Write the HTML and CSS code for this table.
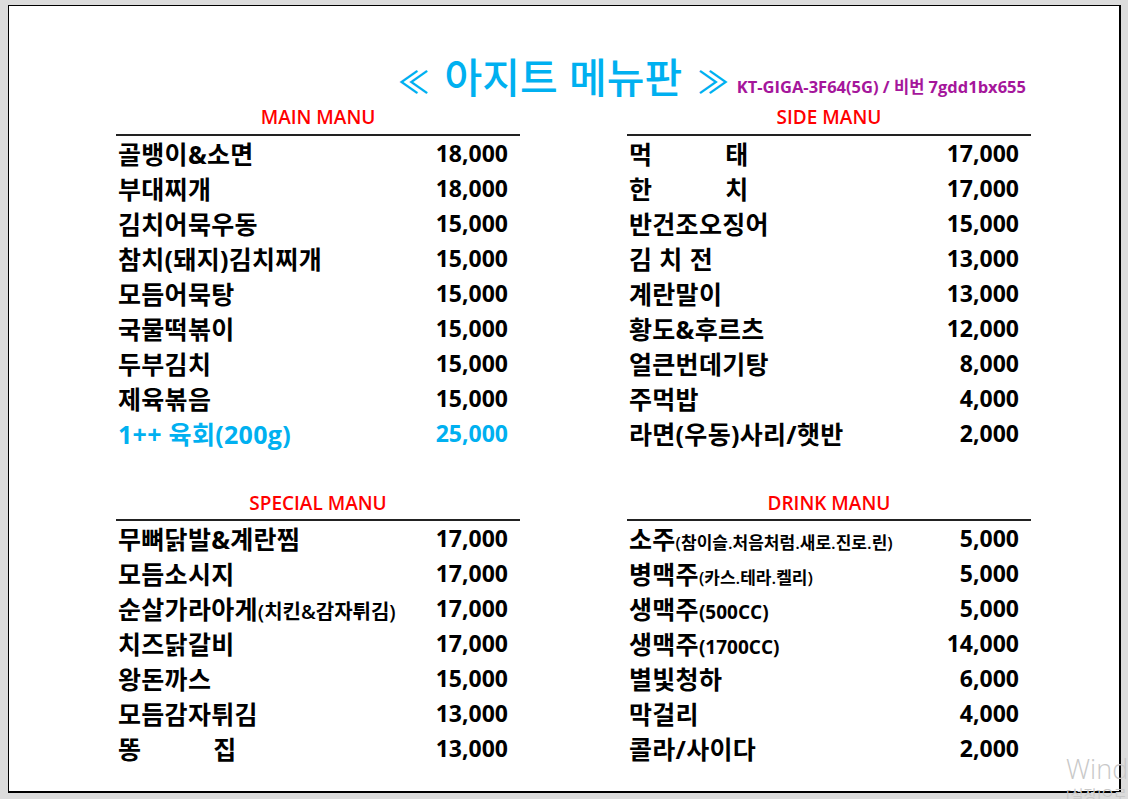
FILE: index.html
```html
<!DOCTYPE html>
<html lang="ko">
<head>
<meta charset="utf-8">
<title>아지트 메뉴판</title>
<link rel="stylesheet" href="styles.css">
</head>
<body>
<div class="sheet">
  <div class="title-row">
    <span class="title"><span class="arrow left">≪</span> 아지트 메뉴판 <span class="arrow right">≫</span></span>
    <span class="wifi">KT-GIGA-3F64(5G) / 비번 7gdd1bx655</span>
  </div>
  <div class="grid">
    <section class="menu">
      <div class="head">MAIN MANU</div>
      <div class="row"><span class="name">골뱅이&amp;소면</span><span>18,000</span></div>
      <div class="row"><span class="name">부대찌개</span><span>18,000</span></div>
      <div class="row"><span class="name">김치어묵우동</span><span>15,000</span></div>
      <div class="row"><span class="name">참치(돼지)김치찌개</span><span>15,000</span></div>
      <div class="row"><span class="name">모듬어묵탕</span><span>15,000</span></div>
      <div class="row"><span class="name">국물떡볶이</span><span>15,000</span></div>
      <div class="row"><span class="name">두부김치</span><span>15,000</span></div>
      <div class="row"><span class="name">제육볶음</span><span>15,000</span></div>
      <div class="row hl"><span class="name">1++ 육회(200g)</span><span>25,000</span></div>
    </section>
    <section class="menu">
      <div class="head">SIDE MANU</div>
      <div class="row"><span class="name">먹<i class="wide"></i>태</span><span>17,000</span></div>
      <div class="row"><span class="name">한<i class="wide"></i>치</span><span>17,000</span></div>
      <div class="row"><span class="name">반건조오징어</span><span>15,000</span></div>
      <div class="row"><span class="name">김<i class="narrow"></i>치<i class="narrow"></i>전</span><span>13,000</span></div>
      <div class="row"><span class="name">계란말이</span><span>13,000</span></div>
      <div class="row"><span class="name">황도&amp;후르츠</span><span>12,000</span></div>
      <div class="row"><span class="name">얼큰번데기탕</span><span>8,000</span></div>
      <div class="row"><span class="name">주먹밥</span><span>4,000</span></div>
      <div class="row"><span class="name">라면(우동)사리/햇반</span><span>2,000</span></div>
    </section>
    <section class="menu second">
      <div class="head">SPECIAL MANU</div>
      <div class="row"><span class="name">무뼈닭발&amp;계란찜</span><span>17,000</span></div>
      <div class="row"><span class="name">모듬소시지</span><span>17,000</span></div>
      <div class="row"><span class="name">순살가라아게<small class="note">(치킨&amp;감자튀김)</small></span><span>17,000</span></div>
      <div class="row"><span class="name">치즈닭갈비</span><span>17,000</span></div>
      <div class="row"><span class="name">왕돈까스</span><span>15,000</span></div>
      <div class="row"><span class="name">모듬감자튀김</span><span>13,000</span></div>
      <div class="row"><span class="name">똥<i class="mid"></i>집</span><span>13,000</span></div>
    </section>
    <section class="menu second">
      <div class="head">DRINK MANU</div>
      <div class="row"><span class="name">소주<small class="note sm">(참이슬.처음처럼.새로.진로.린)</small></span><span>5,000</span></div>
      <div class="row"><span class="name">병맥주<small class="note sm">(카스.테라.켈리)</small></span><span>5,000</span></div>
      <div class="row"><span class="name">생맥주<small class="note cc">(500CC)</small></span><span>5,000</span></div>
      <div class="row"><span class="name">생맥주<small class="note cc">(1700CC)</small></span><span>14,000</span></div>
      <div class="row"><span class="name">별빛청하</span><span>6,000</span></div>
      <div class="row"><span class="name">막걸리</span><span>4,000</span></div>
      <div class="row"><span class="name">콜라/사이다</span><span>2,000</span></div>
    </section>
  </div>
</div>
<div class="watermark">
  <div class="wm-big">Windows 정품 인증</div>
  <div class="wm-small">[설정]으로 이동하여 Windows를 정품 인증합니다.</div>
</div>
</body>
</html>
```

FILE: styles.css
```css
html, body {
  margin: 0;
  padding: 0;
}
body {
  background: #dcdcdc;
  width: 1128px;
  height: 799px;
  overflow: hidden;
  font-family: "Open Sans", "Noto Sans CJK KR", sans-serif;
  color: #000;
}
.sheet {
  box-sizing: border-box;
  margin: 5px 0 0 8px;
  width: 1113px;
  height: 788px;
  background: #fff;
  border-style: solid;
  border-color: #000;
  border-width: 1px 2px 2px 1px;
}
.title-row {
  box-sizing: border-box;
  height: 94px;
  padding: 49px 0 0 389px;
  display: flex;
  align-items: baseline;
  gap: 8px;
  white-space: nowrap;
}
.title {
  font-family: "Noto Sans CJK KR", sans-serif;
  font-size: 41px;
  font-weight: 500;
  color: #00b0f0;
  line-height: 1;
}
.title .arrow {
  font-size: 31px;
}
.title .arrow.left {
  margin-right: 4px;
}
.title .arrow.right {
  margin-left: 4px;
}
.wifi {
  font-size: 16.5px;
  font-weight: 700;
  color: #a5169b;
}
.grid {
  display: grid;
  grid-template-columns: 404px 404px;
  column-gap: 107px;
  padding-left: 107px;
}
.menu.second {
  margin-top: 33px;
}
.menu.second .head {
  height: 37px;
  padding-top: 2px;
}
.head {
  box-sizing: border-box;
  height: 36px;
  border-bottom: 2px solid #222;
  display: flex;
  align-items: center;
  justify-content: center;
  color: #ff0000;
  font-size: 19px;
  font-weight: 600;
}
.row {
  box-sizing: border-box;
  height: 35px;
  padding: 0 12px 1px 2px;
  display: flex;
  align-items: center;
  justify-content: space-between;
  font-size: 23px;
  font-weight: 700;
  white-space: nowrap;
}
.row .name {
  font-size: 25px;
  letter-spacing: 0.3px;
}
.row.hl {
  color: #00b0f0;
}
.row i {
  display: inline-block;
}
.row .wide {
  width: 73px;
}
.row .mid {
  width: 72px;
}
.row .narrow {
  width: 7px;
}
.note {
  font-size: 20px;
  font-weight: 600;
  letter-spacing: 0;
}
.note.sm {
  font-size: 17px;
}
.note.cc {
  font-size: 19px;
  font-weight: 700;
}
.watermark {
  position: absolute;
  left: 1066px;
  top: 752px;
  color: #c8c8c8;
  white-space: nowrap;
  font-family: "Open Sans", "Noto Sans CJK KR", sans-serif;
}
.wm-big {
  font-size: 27px;
  font-weight: 300;
  line-height: 34px;
}
.wm-small {
  font-size: 14px;
  line-height: 18px;
}
```
